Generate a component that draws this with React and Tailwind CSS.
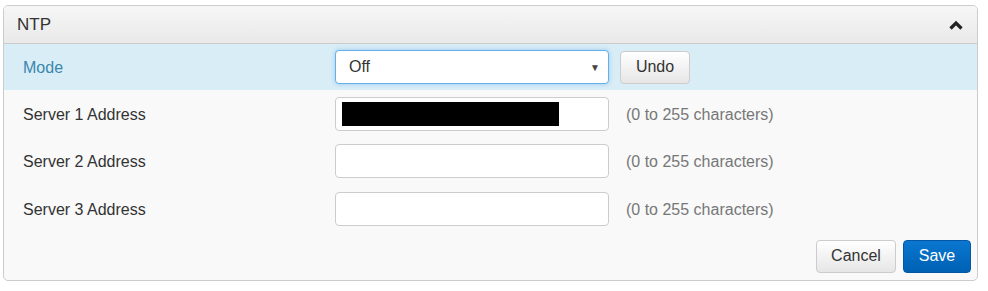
import React from "react";

const Row = ({ label, children, hint }) => (
  <div className="flex items-center h-[47.5px]">
    <div className="w-[331px] pl-[19px] pt-[2px] text-[#333]">{label}</div>
    {children}
    {hint && <span className="ml-[17px] pt-[2px] text-[#777]">{hint}</span>}
  </div>
);

const Input = ({ filled }) => (
  <div className="w-[274px] h-[34px] bg-white border border-[#ccc] rounded-[4px] flex items-center px-[6px]">
    {filled && <div className="w-[217px] h-[24px] bg-black" />}
  </div>
);

export default function App() {
  return (
    <div className="w-[988px] h-[291px] bg-white pt-[5px] pl-[3px] font-['Liberation_Sans',Arial,sans-serif] text-[16px]">
      <div className="w-[975px] h-[276px] border border-[#ccc] rounded-[5px] bg-[#f9f9f9] overflow-hidden">
        <div className="h-[38px] flex items-center justify-between pl-[13px] pr-[13px] border-b border-[#ccc] bg-gradient-to-b from-[#f6f6f6] to-[#e9e9e9] text-[#333] text-[17px]">
          <span>NTP</span>
          <svg width="16" height="12" viewBox="0 0 16 12">
            <path d="M2.5 9.5 L8 4 L13.5 9.5" fill="none" stroke="#222" strokeWidth="3.2" />
          </svg>
        </div>
        <div className="flex items-center h-[46px] bg-[#d9edf7]">
          <div className="w-[331px] pl-[19px] pt-[1px] text-[#3a87ad]">Mode</div>
          <div className="w-[274px] h-[34px] bg-white border border-[#66afe9] rounded-[4px] shadow-[0_0_4px_rgba(102,175,233,0.6)] flex items-center justify-between pl-[13px] pr-[8px] text-[#333]">
            <span>Off</span>
            <span className="text-[10px] text-[#444]">▼</span>
          </div>
          <button className="ml-[11px] w-[70px] h-[33px] border border-[#ccc] rounded-[4px] bg-gradient-to-b from-white to-[#e6e6e6] text-[#333]">
            Undo
          </button>
        </div>
        <Row label="Server 1 Address" hint="(0 to 255 characters)">
          <Input filled />
        </Row>
        <Row label="Server 2 Address" hint="(0 to 255 characters)">
          <Input />
        </Row>
        <Row label="Server 3 Address" hint="(0 to 255 characters)">
          <Input />
        </Row>
        <div className="flex justify-end gap-[7px] pr-[6px] pt-[7px]">
          <button className="w-[80px] h-[33px] border border-[#ccc] rounded-[4px] bg-gradient-to-b from-white to-[#e6e6e6] text-[#333]">
            Cancel
          </button>
          <button className="w-[68px] h-[33px] border border-[#0258a5] rounded-[4px] bg-gradient-to-b from-[#0a77d0] to-[#0061b3] text-white">
            Save
          </button>
        </div>
      </div>
    </div>
  );
}
